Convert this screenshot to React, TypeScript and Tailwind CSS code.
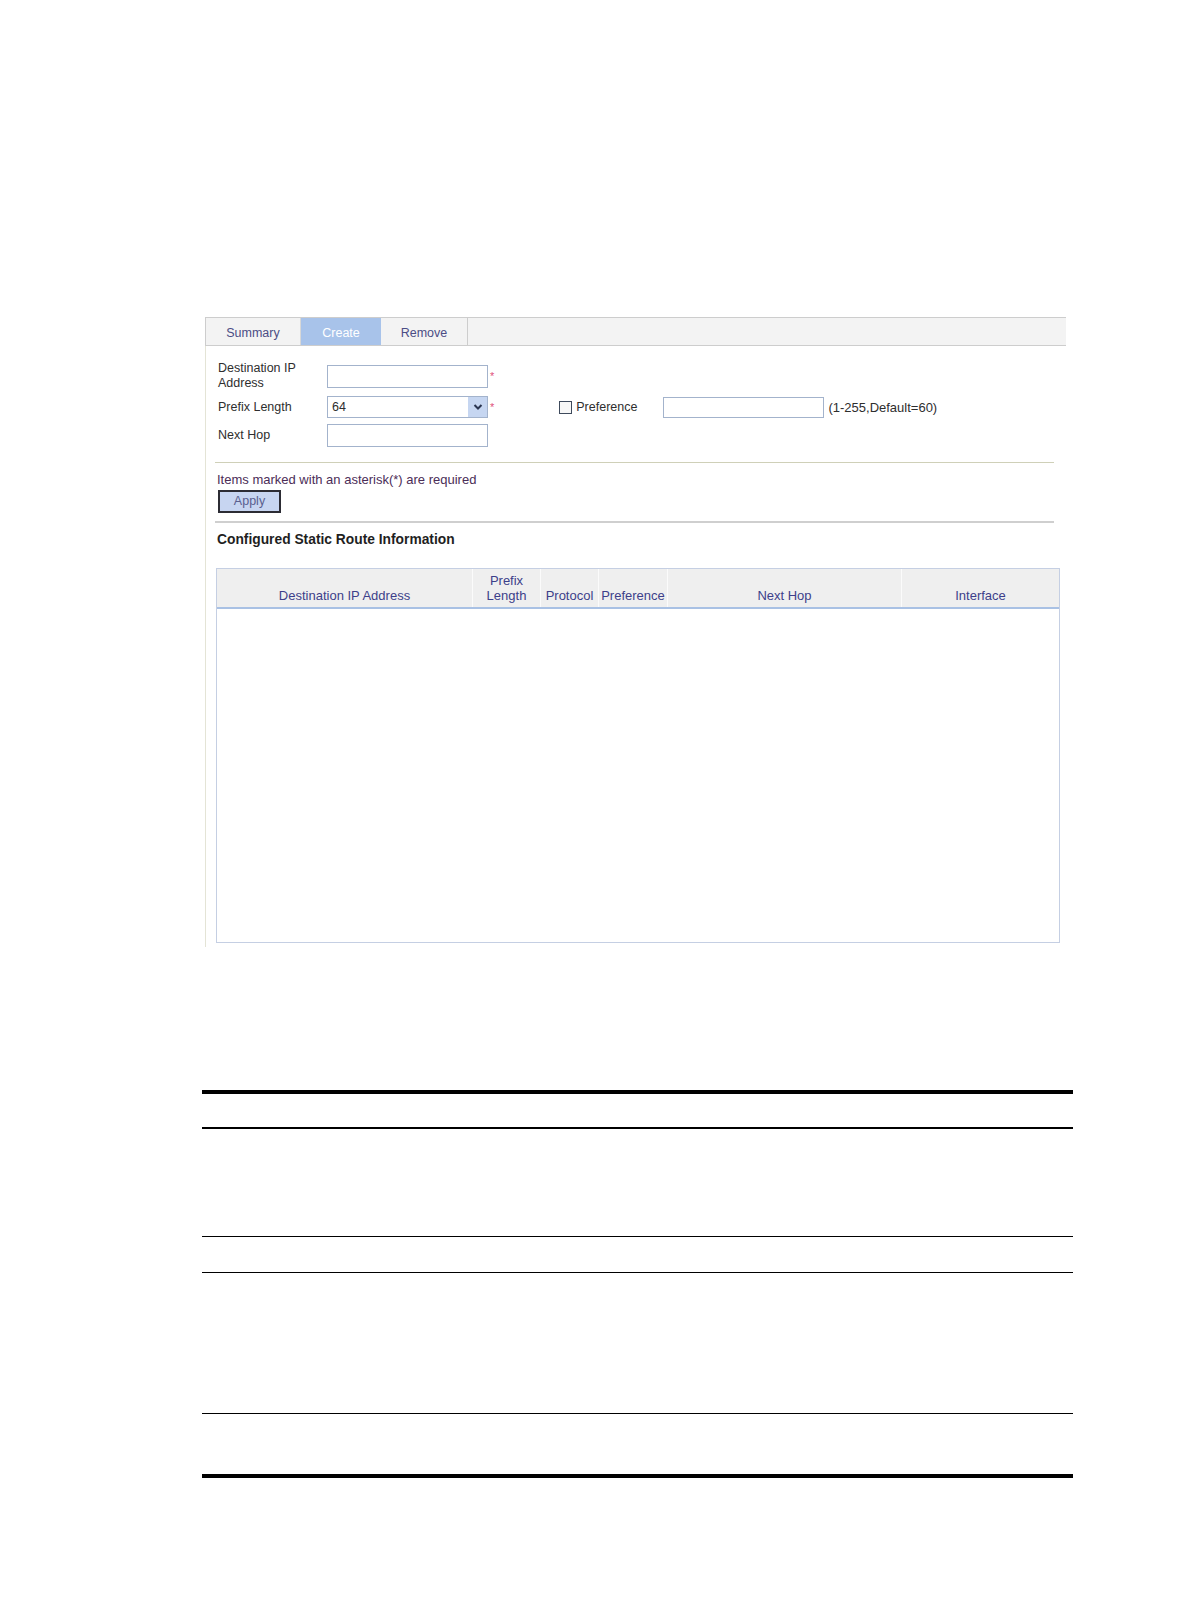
import React from "react";

const font = { fontFamily: '"Liberation Sans", Arial, sans-serif' };

function Chevron() {
  return (
    <svg width="10" height="8" viewBox="0 0 10 8">
      <path d="M1.5 2 L5 5.5 L8.5 2" fill="none" stroke="#2a3550" strokeWidth="2" />
    </svg>
  );
}

function Asterisk() {
  return <span className="ml-[2px] text-[11px] leading-none text-[#e0507a] self-center">*</span>;
}

export default function App() {
  const cols = [
    { w: "w-[255px]", label: "Destination IP Address" },
    { w: "w-[68px]", label: "Prefix Length", two: true },
    { w: "w-[58px]", label: "Protocol" },
    { w: "w-[69px]", label: "Preference" },
    { w: "w-[234px]", label: "Next Hop" },
    { w: "flex-1", label: "Interface" },
  ];
  return (
    <div className="w-[1190px] h-[1616px] bg-white pt-[317px]" style={font}>
      {/* Panel */}
      <div className="ml-[205px] w-[861px]">
        {/* Tabs */}
        <div className="h-[27px] flex border-t border-b border-l border-[#cdcdcd] bg-[#f3f3f3] text-[12.5px] box-content">
          <div className="w-[95px] flex items-center justify-center pt-[4px] text-[#4b4d85] border-r border-[#d8d8d8]">Summary</div>
          <div className="w-[80px] flex items-center justify-center pt-[4px] text-white bg-[#a8c3ea]">Create</div>
          <div className="w-[87px] flex items-center justify-center pt-[4px] text-[#4b4d85] border-r border-[#cdcdcd]">Remove</div>
        </div>
        {/* Body */}
        <div className="h-[601px] border-l border-[#e4e4d6] text-[12.5px] text-[#2e2e2e]">
          {/* form */}
          <div className="pl-[12px] pt-[15px]">
            <div className="flex h-[32px]">
              <div className="w-[109px] leading-[15px] pt-[0px]">Destination IP<br />Address</div>
              <div className="flex items-start pt-[4px]">
                <div className="w-[161px] h-[23px] border border-[#a3b3cc] bg-white" />
                <span className="ml-[2px] mt-[6px] text-[11px] leading-none text-[#e0507a]">*</span>
              </div>
            </div>
            <div className="flex h-[24px] mt-[2px] items-center">
              <div className="w-[109px]">Prefix Length</div>
              <div className="w-[161px] h-[22px] border border-[#a3b3cc] bg-white flex items-center justify-between">
                <span className="pl-[4px]">64</span>
                <span className="w-[19px] h-[20px] bg-[#c6d6f1] flex items-center justify-center">
                  <Chevron />
                </span>
              </div>
              <Asterisk />
              <div className="ml-[65px] w-[13px] h-[13px] border border-[#3e4a5c] bg-[#f7f7f7]" />
              <span className="ml-[4px] text-[12.5px]">Preference</span>
              <div className="ml-[26px] w-[161px] h-[21px] border border-[#a3b3cc] bg-white" />
              <span className="ml-[4px] mt-[2px] text-[13px]">(1-255,Default=60)</span>
            </div>
            <div className="flex h-[25px] mt-[4px] items-center">
              <div className="w-[109px]">Next Hop</div>
              <div className="w-[161px] h-[23px] border border-[#a3b3cc] bg-white" />
            </div>
          </div>
          <div className="ml-[9px] w-[839px] h-px bg-[#cfd0b8] mt-[14px]" />
          <div className="ml-[11px] mt-[10px] leading-[14px] text-[13px] text-[#4b2d57]">Items marked with an asterisk(*) are required</div>
          <div className="ml-[12px] mt-[3px] w-[63px] h-[23px] border-2 border-[#2c2c34] bg-[#c7d5f1] flex items-center justify-center text-[12.5px] text-[#5a5f8f]">Apply</div>
          <div className="ml-[9px] w-[839px] h-[2px] bg-[#cfcfcf] mt-[8px]" />
          <div className="ml-[11px] mt-[9px] leading-[16px] text-[13.8px] font-bold text-[#1f1f1f]">Configured Static Route Information</div>
          {/* Table */}
          <div className="ml-[10px] mt-[20px] w-[844px] h-[375px] border border-[#c5cfe3] flex flex-col">
            <div className="h-[40px] bg-[#efefef] flex border-b-2 border-[#a9c1e4] text-[#3d3f8a] text-[13px]">
              {cols.map((c, i) => (
                <div
                  key={i}
                  className={`${c.w} flex items-end justify-center text-center leading-[15px] pb-[4px] ${i > 0 ? "border-l border-[#fbfbfb]" : ""}`}
                >
                  {c.two ? (
                    <span>Prefix<br />Length</span>
                  ) : (
                    <span>{c.label}</span>
                  )}
                </div>
              ))}
            </div>
            <div className="flex-1 bg-white" />
          </div>
        </div>
      </div>

      {/* Document table lines */}
      <div className="ml-[202px] w-[871px] mt-[143px]">
        <div className="h-[4px] bg-black" />
        <div className="h-[33px]" />
        <div className="h-[2px] bg-black" />
        <div className="h-[107px]" />
        <div className="h-px bg-black" />
        <div className="h-[35px]" />
        <div className="h-px bg-black" />
        <div className="h-[140px]" />
        <div className="h-px bg-black" />
        <div className="h-[60px]" />
        <div className="h-[4px] bg-black" />
      </div>
    </div>
  );
}
